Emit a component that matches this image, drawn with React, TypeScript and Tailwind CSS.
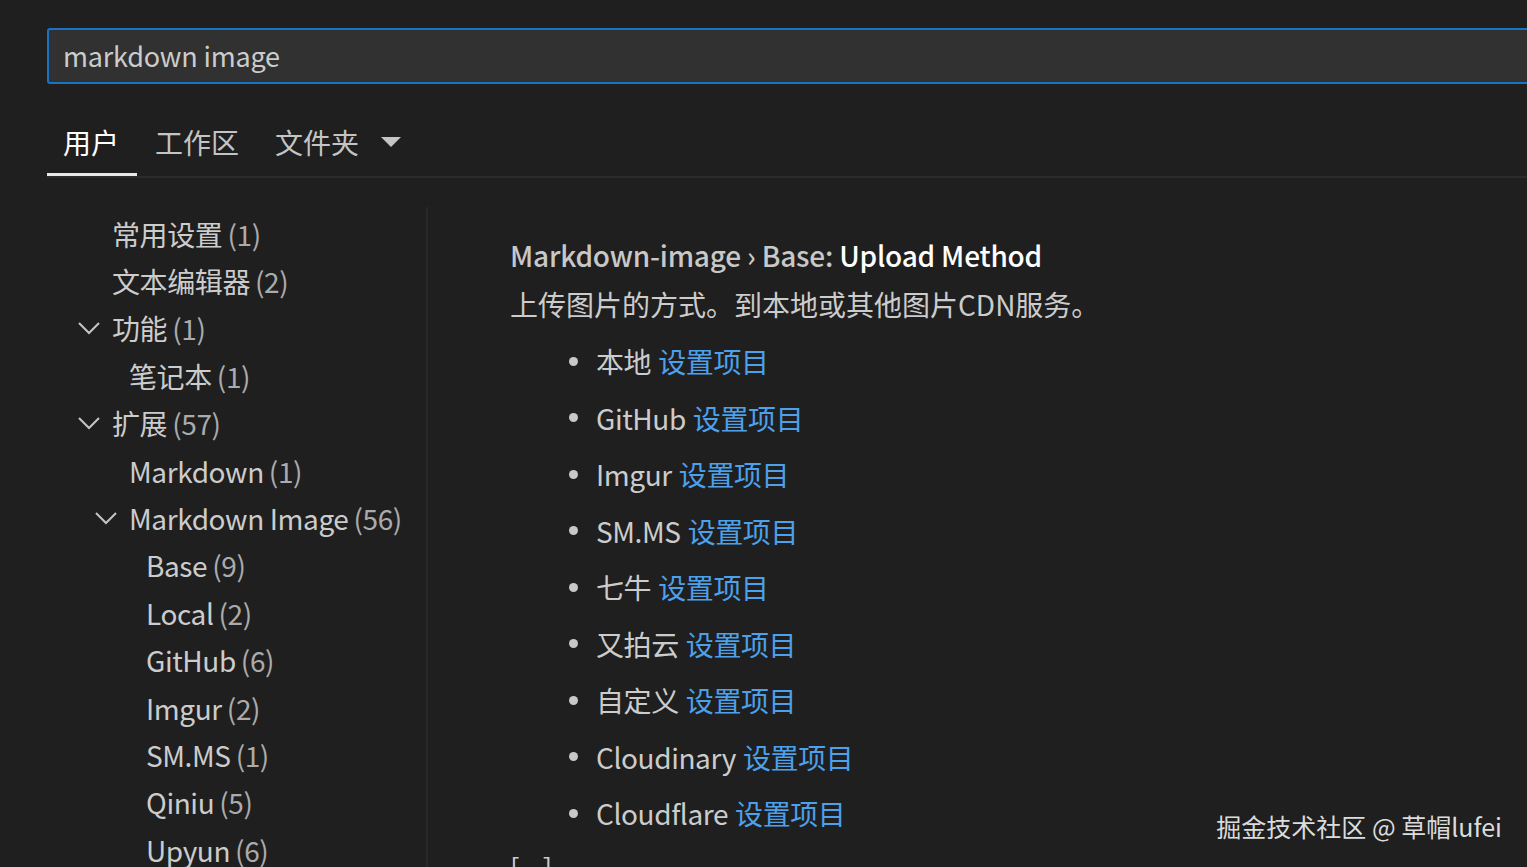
import React from 'react';

type TocItem = { label: string; count: number; level: number; expanded?: boolean };

const toc: TocItem[] = [
  { label: '常用设置', count: 1, level: 0 },
  { label: '文本编辑器', count: 2, level: 0 },
  { label: '功能', count: 1, level: 0, expanded: true },
  { label: '笔记本', count: 1, level: 1 },
  { label: '扩展', count: 57, level: 0, expanded: true },
  { label: 'Markdown', count: 1, level: 1 },
  { label: 'Markdown Image', count: 56, level: 1, expanded: true },
  { label: 'Base', count: 9, level: 2 },
  { label: 'Local', count: 2, level: 2 },
  { label: 'GitHub', count: 6, level: 2 },
  { label: 'Imgur', count: 2, level: 2 },
  { label: 'SM.MS', count: 1, level: 2 },
  { label: 'Qiniu', count: 5, level: 2 },
  { label: 'Upyun', count: 6, level: 2 },
];

const methods = ['本地', 'GitHub', 'Imgur', 'SM.MS', '七牛', '又拍云', '自定义', 'Cloudinary', 'Cloudflare'];

const indent = ['pl-[31px]', 'pl-[48px]', 'pl-[65px]'];

const Chevron = () => (
  <svg width="22" height="14" viewBox="0 0 22 14" fill="none" className="shrink-0">
    <polyline points="1,2 11,12 21,2" stroke="#c5c5c5" strokeWidth="2" strokeLinejoin="miter" />
  </svg>
);

const App: React.FC = () => {
  return (
    <div
      className="relative w-screen h-screen overflow-hidden bg-[#1f1f1f] text-[#cccccc]"
      style={{ fontFamily: '"Noto Sans CJK SC", "Noto Sans", sans-serif' }}
    >
      {/* search box */}
      <div className="pt-[28px] pl-[47px]">
        <div className="h-[56px] w-[1520px] border-2 border-[#1a72c4] rounded-[3px] bg-[#313131] flex items-center pl-[14px] text-[27px] tracking-[-0.2px] text-[#cccccc]">
          markdown image
        </div>
      </div>

      {/* scope tabs */}
      <div className="ml-[47px] mt-[24px]">
        <div className="flex h-[68px] items-stretch text-[28px]">
          <div className="flex items-center pl-[16px] pr-[18px] border-b-[3px] border-[#e8e8e8] text-white pt-[3px]">用户</div>
          <div className="flex items-center px-[18px] border-b-[3px] border-transparent text-[#c4c4c4] pt-[3px]">工作区</div>
          <div className="flex items-center pl-[18px] border-b-[3px] border-transparent text-[#c4c4c4] pt-[3px]">
            文件夹
            <svg width="20" height="11" viewBox="0 0 20 11" className="ml-[22px]">
              <polygon points="0,0 20,0 10,10" fill="#c5c5c5" />
            </svg>
          </div>
        </div>
        <div className="h-[2px] bg-[#2b2b2b]" />
      </div>

      {/* body */}
      <div className="flex pt-[29px]">
        <div className="ml-[47px] w-[381px] h-[700px] border-r-2 border-[#282828] pt-[3px]">
          {toc.map((item) => (
            <div key={item.label} className={`flex items-center h-[47.4px] text-[28px] tracking-[-0.4px] ${indent[item.level]}`}>
              <div className="w-[22px] mr-[12px] flex justify-center">{item.expanded && <Chevron />}</div>
              <span className="text-[#cccccc] whitespace-nowrap">{item.label}</span>
              <span className="ml-[5px] text-[#ababab]">({item.count})</span>
            </div>
          ))}
        </div>

        <div className="pl-[82px] pt-[28px]">
          <div className="h-[40px] leading-[40px] text-[28px] font-medium tracking-[-0.2px] whitespace-nowrap">
            <span className="text-[#c8c8c8]">Markdown-image › Base: </span>
            <span className="text-white">Upload Method</span>
          </div>
          <div className="mt-[9px] h-[40px] leading-[40px] text-[28px] text-[#cccccc] whitespace-nowrap">
            上传图片的方式。到本地或其他图片CDN服务。
          </div>
          <ul className="mt-[9px]">
            {methods.map((m) => (
              <li key={m} className="flex items-center h-[56.5px] text-[28px] tracking-[-0.4px] whitespace-nowrap">
                <span className="ml-[59px] w-[9px] h-[9px] rounded-full bg-[#c8c8c8]" />
                <span className="ml-[18px] text-[#cccccc]">{m}</span>
                <span className="ml-[7px] text-[#4ca1ea]">设置项目</span>
              </li>
            ))}
          </ul>
          <div className="h-[50px] leading-[50px] text-[28px] text-[#cccccc]">[...]</div>
        </div>
      </div>

      {/* watermark */}
      <div className="absolute right-[25px] bottom-[22px] text-[25px] text-[#dcdcdc] whitespace-nowrap">
        掘金技术社区 @ 草帽lufei
      </div>
    </div>
  );
};

export default App;
